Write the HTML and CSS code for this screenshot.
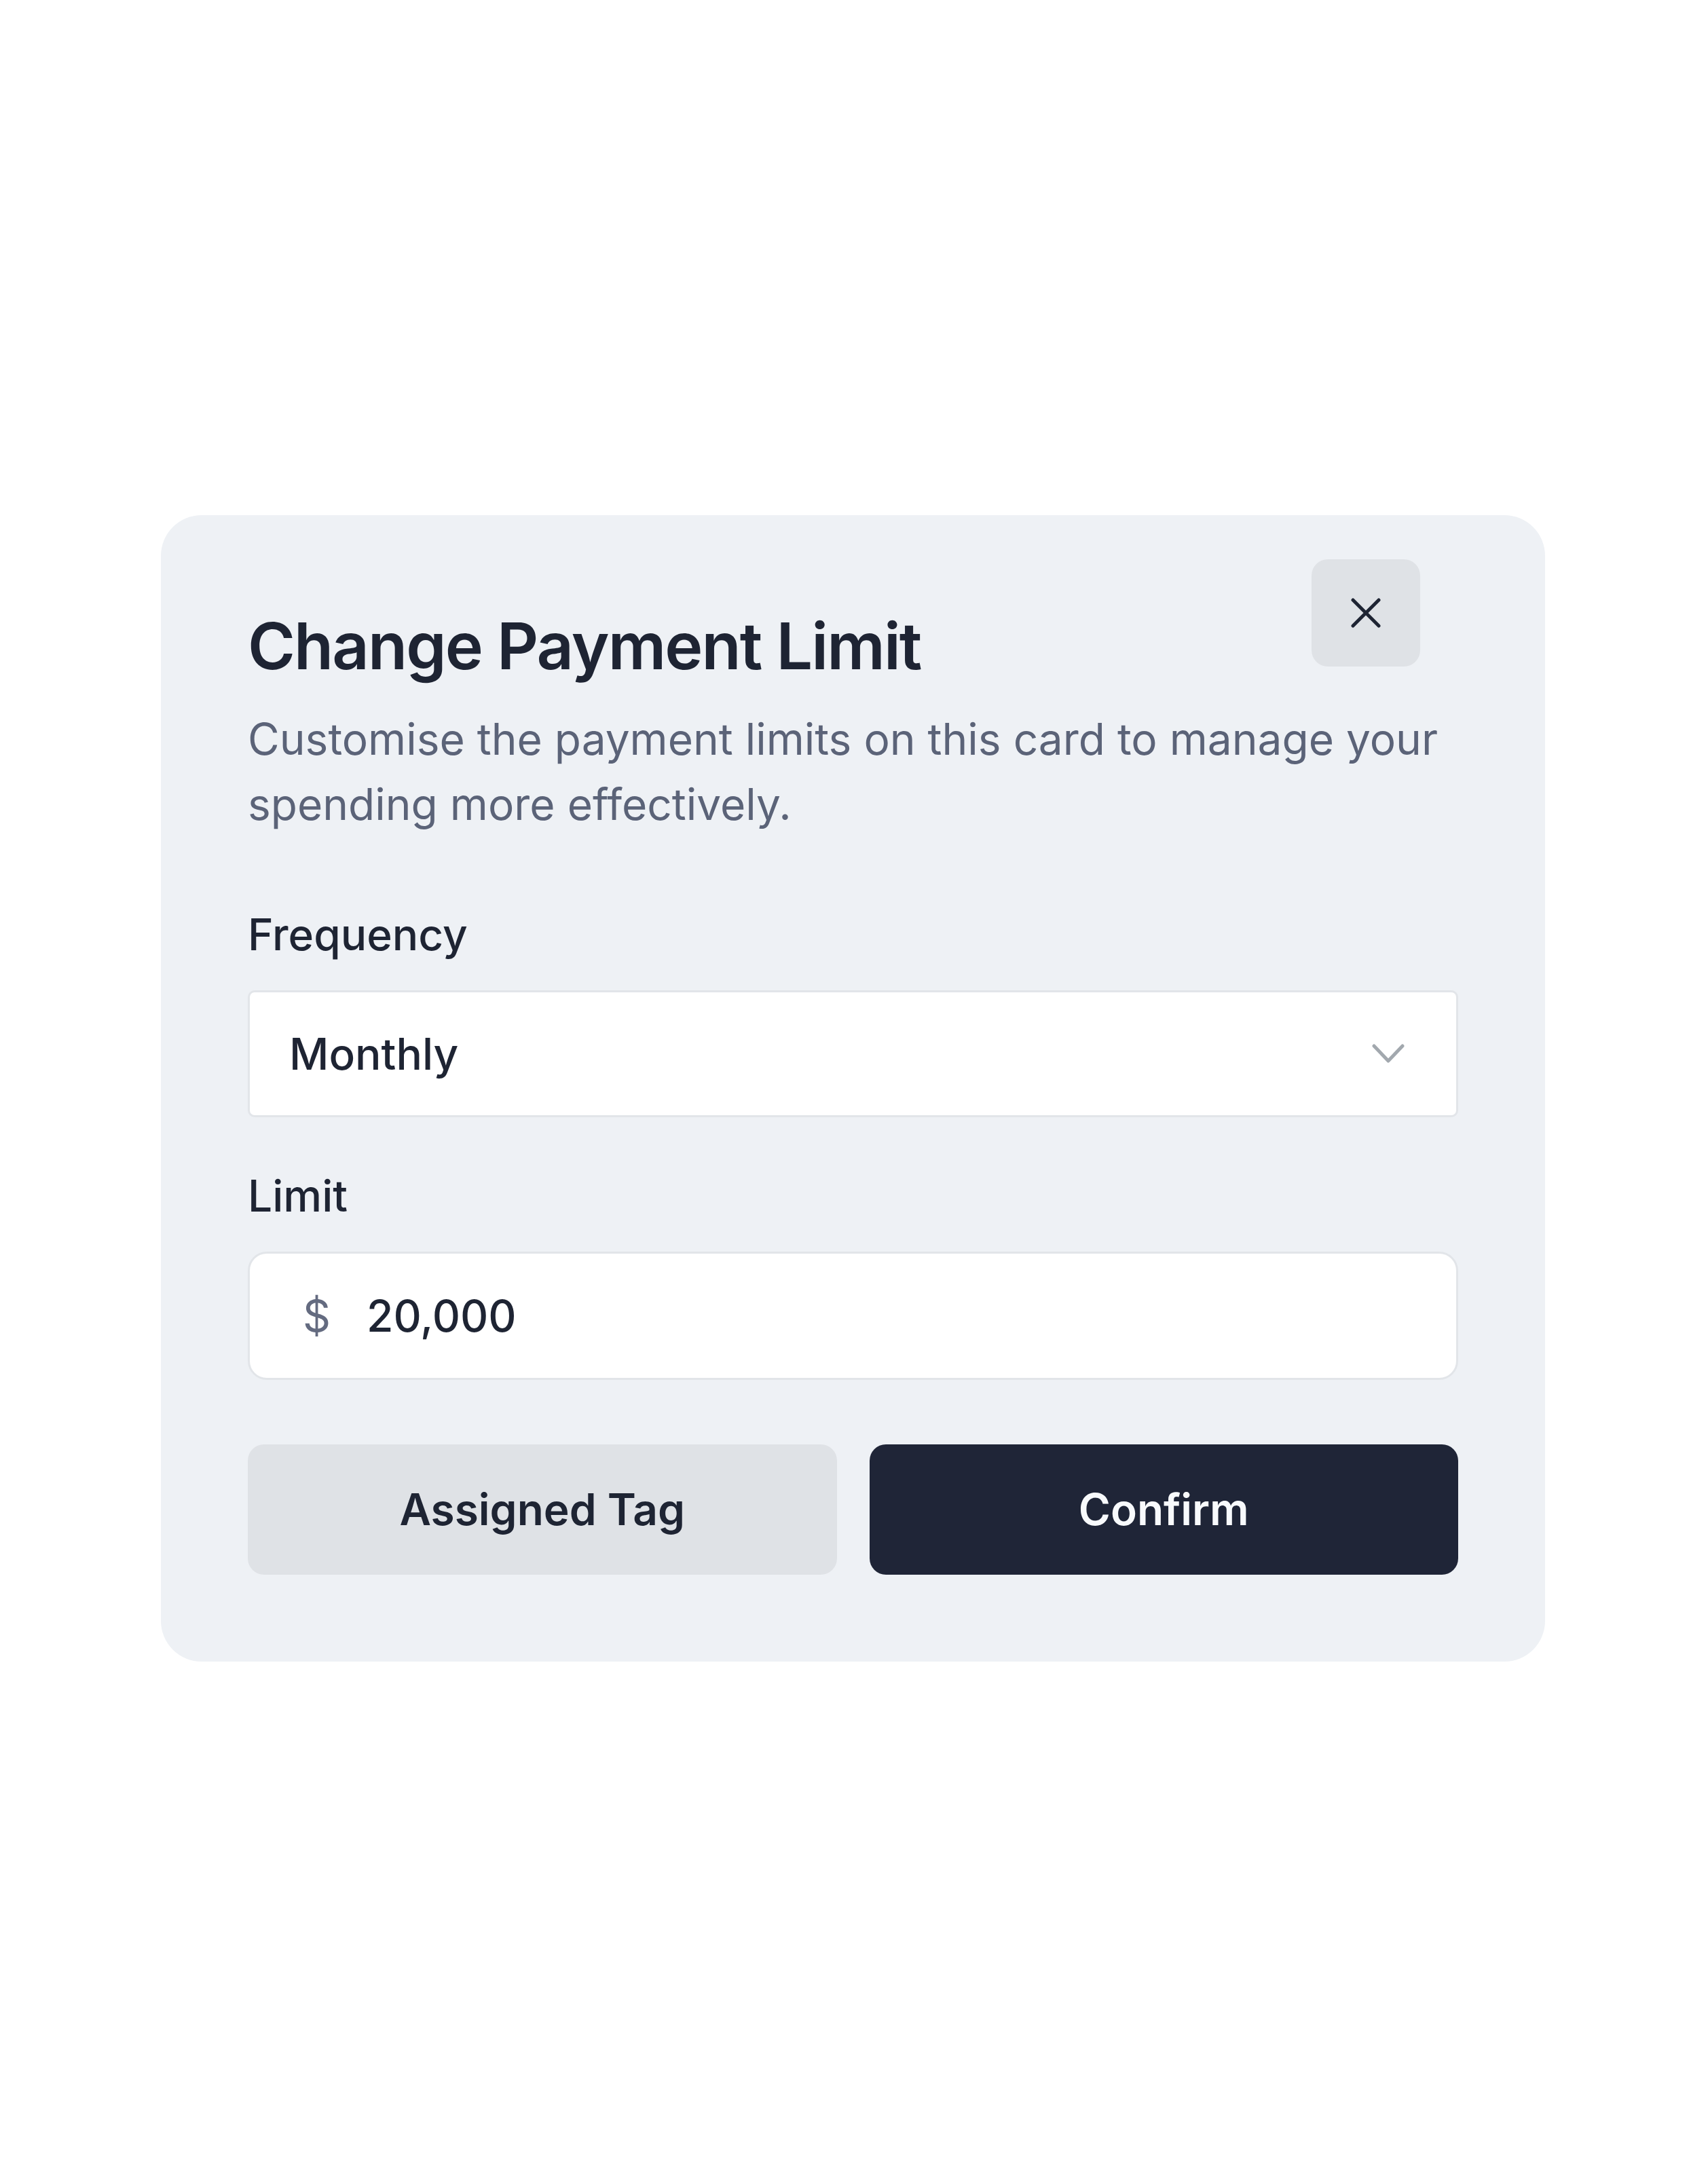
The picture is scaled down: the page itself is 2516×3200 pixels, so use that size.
FILE: index.html
```html
<!DOCTYPE html>
<html lang="en">
<head>
<meta charset="utf-8">
<title>Change Payment Limit</title>
<link rel="stylesheet" href="styles.css">
</head>
<body>
<main class="page">
  <section class="card">
    <button class="close" type="button" aria-label="Close">
      <svg width="44" height="44" viewBox="0 0 44 44" fill="none" stroke="currentColor" stroke-width="5" stroke-linecap="round"><path d="M3 3L41 41M41 3L3 41"/></svg>
    </button>
    <h1 class="title">Change Payment Limit</h1>
    <p class="subtitle">Customise the payment limits on this card to manage your spending more effectively.</p>
    <div class="field field-first">
      <label class="label">Frequency</label>
      <div class="select">
        <span class="value">Monthly</span>
        <svg class="chev" width="48" height="28" viewBox="0 0 48 28" fill="none" stroke="currentColor" stroke-width="5" stroke-linecap="round" stroke-linejoin="round"><path d="M3 3L24 25L45 3"/></svg>
      </div>
    </div>
    <div class="field">
      <label class="label">Limit</label>
      <div class="input">
        <span class="currency">$</span>
        <span class="value">20,000</span>
      </div>
    </div>
    <div class="actions">
      <button class="btn btn-secondary" type="button">Assigned Tag</button>
      <button class="btn btn-primary" type="button">Confirm</button>
    </div>
  </section>
</main>
</body>
</html>
```
FILE: styles.css
```css
* { box-sizing: border-box; }
html, body { margin: 0; padding: 0; background: #ffffff; }
body { font-family: Inter, "Noto Sans", "Liberation Sans", sans-serif; color: #1e2433; }
.page {
  min-height: 3200px;
  display: flex;
  align-items: center;
  justify-content: center;
  padding: 6px 3px 0 0;
}
.card {
  position: relative;
  width: 2039px;
  background: #eef1f5;
  border-radius: 60px;
  padding: 128px;
}
.close {
  position: absolute;
  top: 65px;
  right: 184px;
  width: 160px;
  height: 158px;
  border: 0;
  border-radius: 24px;
  background: #dfe2e6;
  color: #1e2433;
  display: flex;
  align-items: center;
  justify-content: center;
  padding: 0;
}
.title {
  margin: 0;
  font-size: 95px;
  line-height: 130px;
  font-weight: 600;
  letter-spacing: -0.02em;
  color: #1e2433;
}
.subtitle {
  margin: 24px 0 0;
  font-size: 64px;
  line-height: 96px;
  font-weight: 400;
  color: #5b6378;
}
.field { display: flex; flex-direction: column; gap: 34px; margin-top: 68px; }
.field-first { margin-top: 96px; }
.label { font-size: 64px; line-height: 96px; font-weight: 500; color: #1e2433; }
.select {
  height: 187px;
  background: #ffffff;
  border: 3px solid #e2e5e9;
  border-radius: 10px;
  display: flex;
  align-items: center;
  justify-content: space-between;
  padding: 0 76px 0 58px;
  font-size: 64px;
}
.chev { color: #a2a8ae; }
.input {
  height: 189px;
  background: #ffffff;
  border: 3px solid #e2e5e9;
  border-radius: 28px;
  display: flex;
  align-items: center;
  padding: 0 0 0 78px;
  font-size: 64px;
}
.currency { color: #646b80; width: 94px; font-weight: 400; }
.value { color: #1e2433; font-weight: 500; }
.actions {
  display: grid;
  grid-template-columns: 1fr 1fr;
  gap: 48px;
  margin-top: 95px;
}
.btn {
  height: 192px;
  border: 0;
  border-radius: 24px;
  font-family: Inter, "Noto Sans", "Liberation Sans", sans-serif;
  font-size: 64px;
  font-weight: 600;
  padding: 0;
}
.btn-secondary { background: #dfe2e6; color: #1e2433; }
.btn-primary { background: #1f2537; color: #f8fafc; }
```
